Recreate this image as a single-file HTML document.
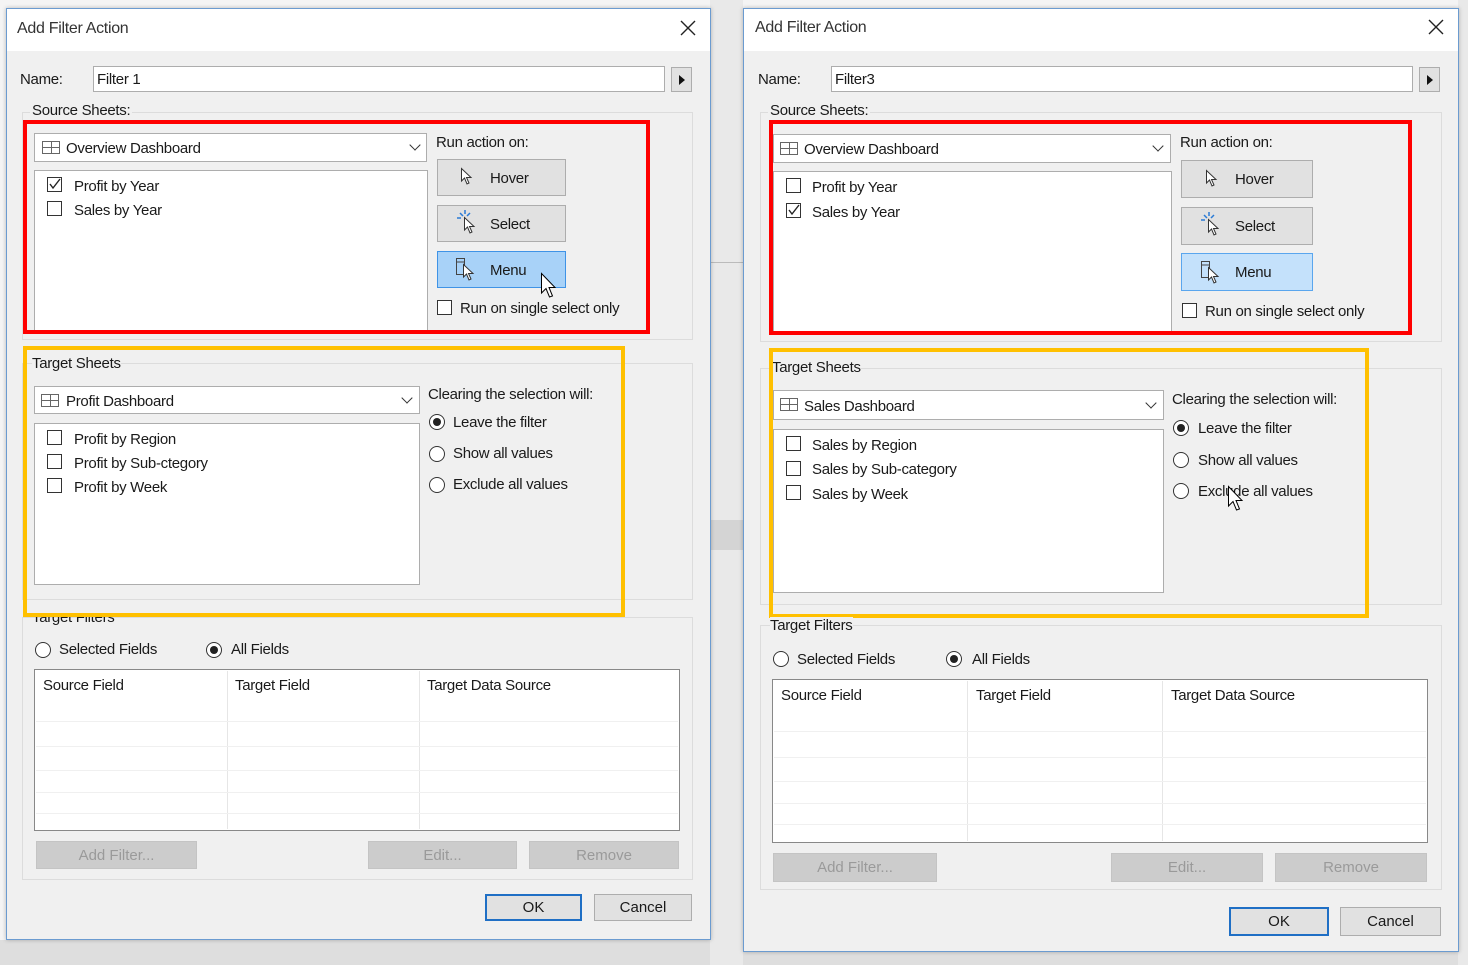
<!DOCTYPE html>
<html><head><meta charset="utf-8"><style>
body{margin:0;width:1468px;height:965px;overflow:hidden;background:#f4f4f4;font-family:"Liberation Sans",sans-serif;font-size:15px;color:#1a1a1a;position:relative}
.a{position:absolute}
.t{position:absolute;line-height:18px;white-space:nowrap;letter-spacing:-0.3px}
.dlg{position:absolute;background:#f0f0f0;border:1px solid #6b9bd0;box-shadow:0 0 4px rgba(0,0,0,.25)}
.title{position:absolute;left:0;right:0;top:0;height:42px;background:#fff}
.inp{position:absolute;background:#fff;border:1px solid #adadad;box-sizing:border-box}
.grp{position:absolute;border:1px solid #dcdcdc;box-sizing:border-box}
.btn{position:absolute;background:#e1e1e1;border:1px solid #adadad;box-sizing:border-box}
.dis{position:absolute;background:#cccccc;border:1px solid #c4c4c4;box-sizing:border-box;color:#9a9a9a;text-align:center}
.cb{position:absolute;width:15px;height:15px;border:1px solid #333;background:#fff;box-sizing:border-box}
.rd{position:absolute;width:16px;height:16px;border:1px solid #333;border-radius:50%;background:#fff;box-sizing:border-box}
.rd.on::after{content:"";position:absolute;left:3px;top:3px;width:8px;height:8px;border-radius:50%;background:#222}
.red{position:absolute;border:4px solid #ff0000;box-sizing:border-box}
.yel{position:absolute;border:4px solid #ffc000;box-sizing:border-box}
.chev{position:absolute;width:7px;height:7px;border-right:1.3px solid #333;border-bottom:1.3px solid #333;transform:rotate(45deg)}
.grid{position:absolute;width:18px;height:13px;border:1px solid #666;box-sizing:border-box}
.grid::before{content:"";position:absolute;left:8px;top:0;bottom:0;border-left:1px solid #666}
.grid::after{content:"";position:absolute;top:5px;left:0;right:0;border-top:1px solid #666}
.col{position:absolute;border-left:1px solid #e6e6e6}
.row{position:absolute;border-top:1px solid #f0f0f0}
svg{position:absolute;overflow:visible}
</style></head><body>
<div class="a" style="left:0;top:940px;width:1468px;height:25px;background:#dedede"></div>
<div class="a" style="left:710px;top:0;width:33px;height:965px;background:#e9e9e9"></div>
<div class="a" style="left:710px;top:262px;width:33px;height:1px;background:#bbb"></div>
<div class="a" style="left:710px;top:520px;width:33px;height:30px;background:#d4d4d4"></div>
<div class="a" style="left:1458px;top:0;width:10px;height:965px;background:#e9e9e9"></div>

<!-- LEFT DIALOG -->
<div class="dlg" style="left:6px;top:8px;width:703px;height:930px"><div class="title"></div></div>
<div class="t" style="left:17px;top:20px;font-size:16px;color:#333">Add Filter Action</div>
<svg style="left:681px;top:21px" width="14" height="14"><path d="M0 0L14 14M14 0L0 14" stroke="#222" stroke-width="1.4"/></svg>
<div class="t" style="left:20px;top:71px">Name:</div>
<div class="inp" style="left:93px;top:66px;width:572px;height:26px"></div>
<div class="t" style="left:97px;top:71px">Filter 1</div>
<div class="btn" style="left:671px;top:67px;width:21px;height:25px"></div>
<svg style="left:679px;top:75px" width="6" height="10"><path d="M0 0L6 5L0 10Z" fill="#111"/></svg>
<div class="grp" style="left:22px;top:112px;width:671px;height:228px"></div>
<div class="t" style="left:30px;top:102px;background:#f0f0f0;padding:0 2px">Source Sheets:</div>
<div class="inp" style="left:34px;top:133px;width:393px;height:29px"></div>
<div class="grid" style="left:42px;top:141px"></div>
<div class="t" style="left:66px;top:140px">Overview Dashboard</div>
<div class="chev" style="left:411px;top:141px"></div>
<div class="inp" style="left:34px;top:170px;width:394px;height:162px"></div>
<div class="cb" style="left:47px;top:177px"></div><svg style="left:49px;top:179px" width="12" height="10"><path d="M1 5L4 9L11 0" fill="none" stroke="#222" stroke-width="1.4"/></svg>
<div class="t" style="left:74px;top:178px">Profit by Year</div>
<div class="cb" style="left:47px;top:201px"></div>
<div class="t" style="left:74px;top:202px">Sales by Year</div>
<div class="t" style="left:436px;top:134px">Run action on:</div>
<div class="btn" style="left:437px;top:159px;width:129px;height:37px"></div>
<svg style="left:461px;top:168px" width="12" height="18"><path d="M0.5 0.5L0.5 13L3.5 10L6 16L8 15L5.5 9.5L10 9.5Z" fill="#fff" stroke="#333" stroke-width="1"/></svg>
<div class="t" style="left:490px;top:170px">Hover</div>
<div class="btn" style="left:437px;top:205px;width:129px;height:37px"></div>
<svg style="left:457px;top:210px" width="20" height="24"><path d="M3 3L6 6M8 0V4M13 3L10 6M0 8H4" stroke="#2a7bd6" stroke-width="1.5"/><path d="M7.5 7.5L7.5 20L10.5 17L13 23L15 22L12.5 16.5L17 16.5Z" fill="#fff" stroke="#333"/></svg>
<div class="t" style="left:490px;top:216px">Select</div>
<div class="btn" style="left:437px;top:251px;width:129px;height:37px;background:#a8d2f8;border-color:#3f93e6"></div>
<svg style="left:456px;top:258px" width="20" height="24"><rect x="0.5" y="0.5" width="8" height="16" fill="none" stroke="#444"/><path d="M1 4H8" stroke="#444"/><path d="M7.5 6.5L7.5 19L10.5 16L13 22L15 21L12.5 15.5L17 15.5Z" fill="#fff" stroke="#333"/></svg>
<div class="t" style="left:490px;top:262px">Menu</div>
<svg style="left:541px;top:273px" width="16" height="26"><path d="M0.5 0.5L0.5 20L5 15.5L8.5 24L11.5 23L8 14.5L14 14.5Z" fill="#fff" stroke="#000"/></svg>
<div class="cb" style="left:437px;top:300px"></div>
<div class="t" style="left:460px;top:300px">Run on single select only</div>
<div class="red" style="left:23px;top:120px;width:627px;height:214px"></div>

<div class="grp" style="left:22px;top:363px;width:671px;height:237px"></div>
<div class="t" style="left:32px;top:355px;background:#f0f0f0">Target Sheets</div>
<div class="inp" style="left:34px;top:386px;width:386px;height:28px"></div>
<div class="grid" style="left:41px;top:394px"></div>
<div class="t" style="left:66px;top:393px">Profit Dashboard</div>
<div class="chev" style="left:403px;top:394px"></div>
<div class="inp" style="left:34px;top:423px;width:386px;height:162px"></div>
<div class="cb" style="left:47px;top:430px"></div><div class="t" style="left:74px;top:431px">Profit by Region</div>
<div class="cb" style="left:47px;top:454px"></div><div class="t" style="left:74px;top:455px">Profit by Sub-ctegory</div>
<div class="cb" style="left:47px;top:478px"></div><div class="t" style="left:74px;top:479px">Profit by Week</div>
<div class="t" style="left:428px;top:386px">Clearing the selection will:</div>
<div class="rd on" style="left:429px;top:414px"></div><div class="t" style="left:453px;top:414px">Leave the filter</div>
<div class="rd" style="left:429px;top:446px"></div><div class="t" style="left:453px;top:445px">Show all values</div>
<div class="rd" style="left:429px;top:477px"></div><div class="t" style="left:453px;top:476px">Exclude all values</div>
<div class="yel" style="left:23px;top:346px;width:602px;height:271px"></div>

<div class="grp" style="left:22px;top:617px;width:671px;height:263px"></div>
<div class="t" style="left:32px;top:609px;clip-path:inset(8px 0 0 0)">Target Filters</div>
<div class="rd" style="left:35px;top:642px"></div><div class="t" style="left:59px;top:641px">Selected Fields</div>
<div class="rd on" style="left:206px;top:642px"></div><div class="t" style="left:231px;top:641px">All Fields</div>
<div class="inp" style="left:34px;top:669px;width:646px;height:162px;border-color:#888"></div>
<div class="col" style="left:227px;top:671px;height:158px"></div>
<div class="col" style="left:419px;top:671px;height:158px"></div>
<div class="row" style="left:36px;top:721px;width:642px"></div>
<div class="row" style="left:36px;top:746px;width:642px"></div>
<div class="row" style="left:36px;top:770px;width:642px"></div>
<div class="row" style="left:36px;top:792px;width:642px"></div>
<div class="row" style="left:36px;top:813px;width:642px"></div>
<div class="t" style="left:43px;top:677px">Source Field</div>
<div class="t" style="left:235px;top:677px">Target Field</div>
<div class="t" style="left:427px;top:677px">Target Data Source</div>
<div class="dis" style="left:36px;top:841px;width:161px;height:28px;line-height:27px">Add Filter...</div>
<div class="dis" style="left:368px;top:841px;width:149px;height:28px;line-height:27px">Edit...</div>
<div class="dis" style="left:529px;top:841px;width:150px;height:28px;line-height:27px">Remove</div>
<div class="btn" style="left:485px;top:894px;width:97px;height:27px;border:2px solid #1f6fc5;text-align:center;line-height:23px">OK</div>
<div class="btn" style="left:594px;top:894px;width:98px;height:27px;text-align:center;line-height:25px">Cancel</div>

<!-- RIGHT DIALOG -->
<div class="dlg" style="left:743px;top:8px;width:714px;height:942px"><div class="title"></div></div>
<div class="t" style="left:755px;top:19px;font-size:16px;color:#333">Add Filter Action</div>
<svg style="left:1429px;top:20px" width="14" height="14"><path d="M0 0L14 14M14 0L0 14" stroke="#222" stroke-width="1.4"/></svg>
<div class="t" style="left:758px;top:71px">Name:</div>
<div class="inp" style="left:831px;top:66px;width:582px;height:26px"></div>
<div class="t" style="left:835px;top:71px">Filter3</div>
<div class="btn" style="left:1419px;top:67px;width:21px;height:25px"></div>
<svg style="left:1427px;top:75px" width="6" height="10"><path d="M0 0L6 5L0 10Z" fill="#111"/></svg>
<div class="grp" style="left:760px;top:112px;width:682px;height:230px"></div>
<div class="t" style="left:768px;top:102px;background:#f0f0f0;padding:0 2px">Source Sheets:</div>
<div class="inp" style="left:773px;top:134px;width:398px;height:29px"></div>
<div class="grid" style="left:780px;top:142px"></div>
<div class="t" style="left:804px;top:141px">Overview Dashboard</div>
<div class="chev" style="left:1154px;top:142px"></div>
<div class="inp" style="left:773px;top:171px;width:399px;height:162px"></div>
<div class="cb" style="left:786px;top:178px"></div>
<div class="t" style="left:812px;top:179px">Profit by Year</div>
<div class="cb" style="left:786px;top:203px"></div><svg style="left:788px;top:205px" width="12" height="10"><path d="M1 5L4 9L11 0" fill="none" stroke="#222" stroke-width="1.4"/></svg>
<div class="t" style="left:812px;top:204px">Sales by Year</div>
<div class="t" style="left:1180px;top:134px">Run action on:</div>
<div class="btn" style="left:1181px;top:160px;width:132px;height:38px"></div>
<svg style="left:1206px;top:170px" width="12" height="18"><path d="M0.5 0.5L0.5 13L3.5 10L6 16L8 15L5.5 9.5L10 9.5Z" fill="#fff" stroke="#333" stroke-width="1"/></svg>
<div class="t" style="left:1235px;top:171px">Hover</div>
<div class="btn" style="left:1181px;top:207px;width:132px;height:38px"></div>
<svg style="left:1201px;top:212px" width="20" height="24"><path d="M3 3L6 6M8 0V4M13 3L10 6M0 8H4" stroke="#2a7bd6" stroke-width="1.5"/><path d="M7.5 7.5L7.5 20L10.5 17L13 23L15 22L12.5 16.5L17 16.5Z" fill="#fff" stroke="#333"/></svg>
<div class="t" style="left:1235px;top:218px">Select</div>
<div class="btn" style="left:1181px;top:253px;width:132px;height:38px;background:#c4e1fb;border-color:#5aa6ee"></div>
<svg style="left:1201px;top:261px" width="20" height="24"><rect x="0.5" y="0.5" width="8" height="16" fill="none" stroke="#444"/><path d="M1 4H8" stroke="#444"/><path d="M7.5 6.5L7.5 19L10.5 16L13 22L15 21L12.5 15.5L17 15.5Z" fill="#fff" stroke="#333"/></svg>
<div class="t" style="left:1235px;top:264px">Menu</div>
<div class="cb" style="left:1182px;top:303px"></div>
<div class="t" style="left:1205px;top:303px">Run on single select only</div>
<div class="red" style="left:769px;top:120px;width:643px;height:215px"></div>

<div class="grp" style="left:760px;top:368px;width:682px;height:237px"></div>
<div class="t" style="left:772px;top:359px;background:#f0f0f0">Target Sheets</div>
<div class="inp" style="left:773px;top:390px;width:391px;height:30px"></div>
<div class="grid" style="left:780px;top:398px"></div>
<div class="t" style="left:804px;top:398px">Sales Dashboard</div>
<div class="chev" style="left:1147px;top:399px"></div>
<div class="inp" style="left:773px;top:429px;width:391px;height:164px"></div>
<div class="cb" style="left:786px;top:436px"></div><div class="t" style="left:812px;top:437px">Sales by Region</div>
<div class="cb" style="left:786px;top:461px"></div><div class="t" style="left:812px;top:461px">Sales by Sub-category</div>
<div class="cb" style="left:786px;top:485px"></div><div class="t" style="left:812px;top:486px">Sales by Week</div>
<div class="t" style="left:1172px;top:391px">Clearing the selection will:</div>
<div class="rd on" style="left:1173px;top:420px"></div><div class="t" style="left:1198px;top:420px">Leave the filter</div>
<div class="rd" style="left:1173px;top:452px"></div><div class="t" style="left:1198px;top:452px">Show all values</div>
<div class="rd" style="left:1173px;top:483px"></div><div class="t" style="left:1198px;top:483px">Exclude all values</div>
<svg style="left:1228px;top:486px" width="16" height="26"><path d="M0.5 0.5L0.5 20L5 15.5L8.5 24L11.5 23L8 14.5L14 14.5Z" fill="#fff" stroke="#000"/></svg>
<div class="yel" style="left:769px;top:348px;width:600px;height:270px"></div>

<div class="grp" style="left:760px;top:625px;width:682px;height:265px"></div>
<div class="t" style="left:770px;top:617px;background:#f0f0f0">Target Filters</div>
<div class="rd" style="left:773px;top:651px"></div><div class="t" style="left:797px;top:651px">Selected Fields</div>
<div class="rd on" style="left:946px;top:651px"></div><div class="t" style="left:972px;top:651px">All Fields</div>
<div class="inp" style="left:772px;top:679px;width:656px;height:164px;border-color:#888"></div>
<div class="col" style="left:967px;top:681px;height:160px"></div>
<div class="col" style="left:1162px;top:681px;height:160px"></div>
<div class="row" style="left:774px;top:731px;width:652px"></div>
<div class="row" style="left:774px;top:757px;width:652px"></div>
<div class="row" style="left:774px;top:781px;width:652px"></div>
<div class="row" style="left:774px;top:803px;width:652px"></div>
<div class="row" style="left:774px;top:824px;width:652px"></div>
<div class="t" style="left:781px;top:687px">Source Field</div>
<div class="t" style="left:976px;top:687px">Target Field</div>
<div class="t" style="left:1171px;top:687px">Target Data Source</div>
<div class="dis" style="left:773px;top:853px;width:164px;height:29px;line-height:28px">Add Filter...</div>
<div class="dis" style="left:1111px;top:853px;width:152px;height:29px;line-height:28px">Edit...</div>
<div class="dis" style="left:1275px;top:853px;width:152px;height:29px;line-height:28px">Remove</div>
<div class="btn" style="left:1229px;top:907px;width:100px;height:29px;border:2px solid #1f6fc5;text-align:center;line-height:25px">OK</div>
<div class="btn" style="left:1340px;top:907px;width:101px;height:29px;text-align:center;line-height:27px">Cancel</div>
</body></html>
